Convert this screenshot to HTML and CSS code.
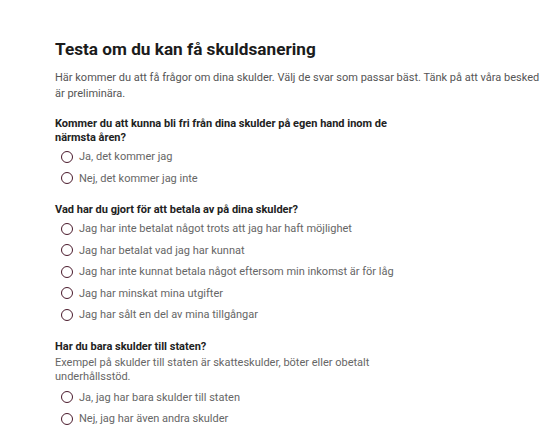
FILE: index.html
```html
<!DOCTYPE html>
<html lang="sv">
<head>
<meta charset="utf-8">
<link rel="stylesheet" href="styles.css">
</head>
<body>
<main class="page">
  <h1 class="title">Testa om du kan få skuldsanering</h1>
  <p class="intro">Här kommer du att få frågor om dina skulder. Välj de svar som passar bäst. Tänk på att våra besked är preliminära.</p>

  <section class="question">
    <h2 class="q-title">Kommer du att kunna bli fri från dina skulder på egen hand inom de närmsta åren?</h2>
    <div class="options">
      <label class="option"><span class="radio"></span>Ja, det kommer jag</label>
      <label class="option"><span class="radio"></span>Nej, det kommer jag inte</label>
    </div>
  </section>

  <section class="question">
    <h2 class="q-title">Vad har du gjort för att betala av på dina skulder?</h2>
    <div class="options">
      <label class="option"><span class="radio"></span>Jag har inte betalat något trots att jag har haft möjlighet</label>
      <label class="option"><span class="radio"></span>Jag har betalat vad jag har kunnat</label>
      <label class="option"><span class="radio"></span>Jag har inte kunnat betala något eftersom min inkomst är för låg</label>
      <label class="option"><span class="radio"></span>Jag har minskat mina utgifter</label>
      <label class="option"><span class="radio"></span>Jag har sålt en del av mina tillgångar</label>
    </div>
  </section>

  <section class="question">
    <h2 class="q-title">Har du bara skulder till staten?</h2>
    <p class="q-desc">Exempel på skulder till staten är skatteskulder, böter eller obetalt underhållsstöd.</p>
    <div class="options options-after-desc">
      <label class="option"><span class="radio"></span>Ja, jag har bara skulder till staten</label>
      <label class="option"><span class="radio"></span>Nej, jag har även andra skulder</label>
    </div>
  </section>
</main>
</body>
</html>
```

FILE: styles.css
```css
* { box-sizing: border-box; }
html, body { margin: 0; padding: 0; background: #fff; }
body {
  font-family: Roboto, "Liberation Sans", Arial, sans-serif;
  color: #222;
}
.page {
  padding: 37px 0 0 55px;
  width: 550px;
}
.title {
  margin: 0;
  font-size: 17.2px;
  font-weight: 700;
  line-height: 24px;
  color: #1b1b1b;
}
.intro {
  margin: 9px 0 0;
  width: 490px;
  font-size: 11px;
  line-height: 16px;
  color: #555;
}
.question {
  margin: 14px 0 0;
  width: 350px;
}
.intro + .question { margin-top: 15px; }
.q-title {
  margin: 0;
  font-size: 11px;
  font-weight: 700;
  line-height: 14px;
  color: #222;
}
.q-desc {
  margin: 2px 0 0;
  font-size: 11px;
  line-height: 14px;
  color: #666;
}
.options {
  display: flex;
  flex-direction: column;
  margin-top: 1px;
}
.options-after-desc { margin-top: 3px; }
.option {
  display: flex;
  align-items: center;
  gap: 6px;
  height: 21.5px;
  padding-left: 6px;
  font-size: 11px;
  color: #666;
}
.radio {
  width: 12px;
  height: 12px;
  border: 1.6px solid #4a1a2c;
  border-radius: 50%;
  flex: none;
}
```
